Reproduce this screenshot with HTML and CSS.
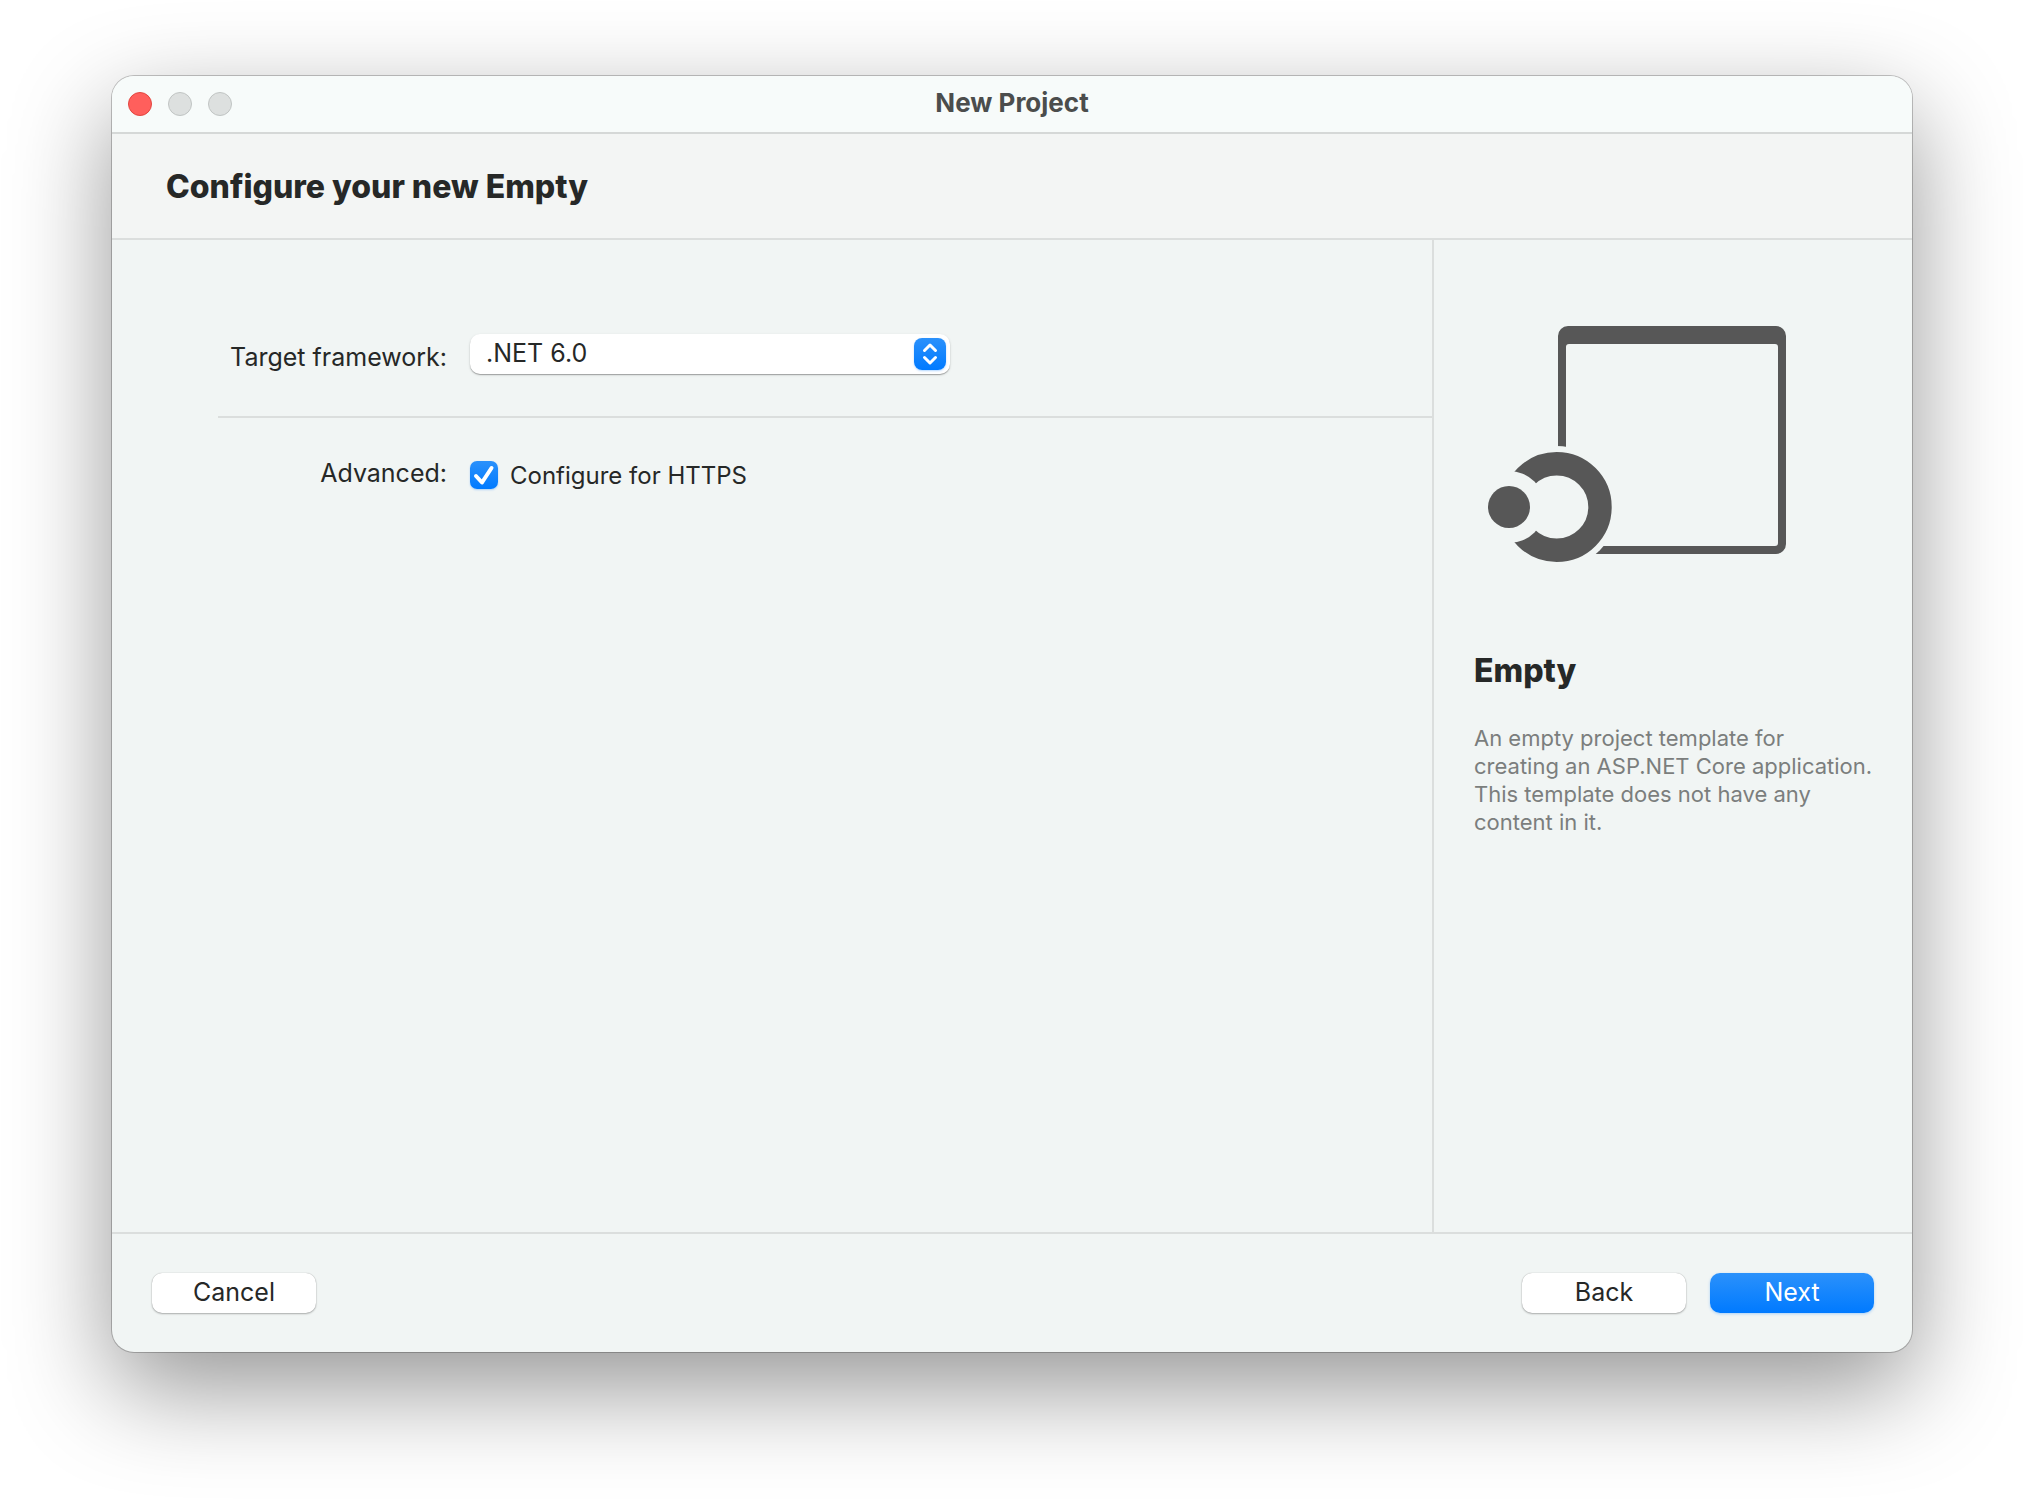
FILE: index.html
```html
<!DOCTYPE html>
<html lang="en">
<head>
<meta charset="utf-8">
<title>New Project</title>
<link rel="stylesheet" href="styles.css">
</head>
<body>
<main class="window">
  <header class="titlebar">
    <div class="traffic">
      <button class="light light-close" type="button" aria-label="Close"></button>
      <button class="light" type="button" aria-label="Minimize" disabled></button>
      <button class="light" type="button" aria-label="Zoom" disabled></button>
    </div>
    <div class="title">New Project</div>
  </header>
  <div class="banner"><h1 class="heading">Configure your new Empty</h1></div>
  <div class="content">
    <form class="form" id="project-form">
      <div class="row row-framework">
        <label class="label" for="framework">Target framework:</label>
        <div class="popup">
          <select class="select" id="framework"><option>.NET 6.0</option></select>
          <svg class="popup-arrows" viewBox="0 0 32 32" aria-hidden="true">
            <path d="M10.500 12.500 16 7l5.500 5.500M10.500 19.500 16 25l5.500-5.500" fill="none" stroke="#fff" stroke-width="3" stroke-linecap="round" stroke-linejoin="round"/>
          </svg>
        </div>
      </div>
      <div class="row row-advanced">
        <div class="label">Advanced:</div>
        <div class="option">
          <span class="check">
            <input class="checkbox" type="checkbox" id="https" checked>
            <svg class="checkmark" viewBox="0 0 28 28" aria-hidden="true">
              <path d="M6 15l6 6.500L21.500 7" fill="none" stroke="#fff" stroke-width="4" stroke-linecap="round" stroke-linejoin="round"/>
            </svg>
          </span>
          <label class="option-label" for="https">Configure for HTTPS</label>
        </div>
      </div>
    </form>
    <aside class="sidebar">
      <svg class="template-icon" viewBox="0 0 298 236" aria-hidden="true">
        <defs>
          <mask id="frame-cut" maskUnits="userSpaceOnUse" x="0" y="0" width="298" height="236">
            <rect width="298" height="236" fill="#fff"/><circle cx="68.700" cy="181" r="61" fill="#000"/>
          </mask>
          <mask id="ring-cut" maskUnits="userSpaceOnUse" x="0" y="0" width="298" height="237">
            <rect width="298" height="237" fill="#fff"/><circle cx="21" cy="181" r="36" fill="#000"/>
          </mask>
        </defs>
        <path mask="url(#frame-cut)" fill="#575757" fill-rule="evenodd" d="M80 0H288a10 10 0 0 1 10 10V218a10 10 0 0 1-10 10H70V10A10 10 0 0 1 80 0ZM81 18a3 3 0 0 0-3 3V220H287a3 3 0 0 0 3-3V21a3 3 0 0 0-3-3Z"/>
        <circle mask="url(#ring-cut)" cx="68.700" cy="181" r="43.300" fill="none" stroke="#575757" stroke-width="23.400"/>
        <circle cx="21" cy="181" r="21" fill="#575757"/>
      </svg>
      <h2 class="heading">Empty</h2>
      <p class="description">An empty project template for<br>creating an ASP.NET Core application. This template does not have any content in it.</p>
    </aside>
  </div>
  <footer class="footer">
    <button class="button" type="button">Cancel</button>
    <div class="actions">
      <button class="button" type="button">Back</button>
      <button class="button button-primary" type="submit" form="project-form">Next</button>
    </div>
  </footer>
</main>
</body>
</html>
```
FILE: styles.css
```css
* { box-sizing: border-box; }

body {
  display: flex;
  min-height: 100vh;
  margin: 0;
  padding: 76px 112px 148px;
  background: #fff;
  color: #262827;
  font-family: Inter, "Liberation Sans", sans-serif;
  font-size: 25px;
  line-height: 32px;
}

h1, h2, p { margin: 0; }
button, select { font: inherit; color: inherit; }

.window {
  display: flex;
  flex: 1;
  flex-direction: column;
  border-radius: 22px;
  background: #f1f5f4;
  overflow: hidden;
  box-shadow: 0 0 0 1px rgba(0, 0, 0, .22), 0 36px 100px rgba(0, 0, 0, .42);
}

.titlebar {
  display: grid;
  grid-template-columns: 1fr auto 1fr;
  align-items: center;
  height: 58px;
  padding: 0 16px;
  background: #f7fbfa;
  border-bottom: 2px solid #d5d8d7;
}

.traffic { display: flex; gap: 16px; }

.light {
  width: 24px;
  height: 24px;
  padding: 0;
  border: 1px solid #c0c4c3;
  border-radius: 50%;
  background: #dde0df;
}

.light-close { border-color: #e2463f; background: #ff5f5c; }

.title {
  padding-bottom: 2px;
  color: #4b4d4c;
  font-size: 26px;
  font-weight: 700;
}

.banner {
  display: flex;
  align-items: center;
  height: 106px;
  padding: 2px 54px 0;
  background: #f3f5f4;
  border-bottom: 2px solid #dbdedd;
}

.heading { font-size: 32px; line-height: 40px; font-weight: 800; }

.content {
  display: grid;
  grid-template-columns: 1fr 480px;
  flex: 1;
}

.form { padding-left: 106px; }

.row {
  display: grid;
  grid-template-columns: 229px 1fr;
  column-gap: 23px;
}

.row-framework {
  padding: 94px 0 42px;
  border-bottom: 2px solid #dbdedd;
}

.row-advanced { padding-top: 39px; }

.label { text-align: right; }
.row-framework .label { padding-top: 7px; }

.popup { position: relative; width: 480px; }

.select {
  display: block;
  appearance: none;
  width: 100%;
  height: 40px;
  padding: 0 48px 2px 16px;
  border: 0;
  border-radius: 10px;
  background: #fff;
  box-shadow: 0 1px 1px rgba(0, 0, 0, .28), 0 1px 3px rgba(0, 0, 0, .12);
}

.popup-arrows {
  position: absolute;
  top: 4px;
  right: 4px;
  width: 32px;
  height: 32px;
  border-radius: 8px;
  background: linear-gradient(#2b91fb, #007aff);
  box-shadow: 0 1px 2px rgba(0, 122, 255, .3);
  pointer-events: none;
}

.option {
  display: flex;
  align-items: center;
  gap: 12px;
  height: 36px;
  font-size: 24px;
}

.option-label { padding-top: 2px; }

.check { position: relative; width: 28px; height: 28px; }

.checkbox {
  display: block;
  appearance: none;
  width: 28px;
  height: 28px;
  margin: 0;
  border-radius: 7px;
  background: #fff;
  box-shadow: 0 1px 2px rgba(0, 122, 255, .3);
}

.checkbox:checked { background: linear-gradient(#2b91fb, #007aff); }

.checkmark {
  position: absolute;
  inset: 0;
  display: none;
  pointer-events: none;
}

.checkbox:checked + .checkmark { display: block; }

.sidebar {
  padding: 86px 32px 40px 40px;
  border-left: 2px solid #dbdedd;
}

.template-icon {
  display: block;
  width: 298px;
  height: 236px;
  margin: 0 0 89px 14px;
}

.description {
  margin-top: 33px;
  color: #7b7e7d;
  font-size: 22px;
  line-height: 28px;
}

.footer {
  display: flex;
  justify-content: space-between;
  align-items: center;
  height: 120px;
  padding: 0 38px 0 40px;
  border-top: 2px solid #dbdedd;
}

.actions { display: flex; gap: 24px; }

.button {
  width: 164px;
  height: 40px;
  padding: 0 0 2px;
  border: 0;
  border-radius: 10px;
  background: #fff;
  box-shadow: 0 0 1px rgba(0, 0, 0, .3), 0 1px 2px rgba(0, 0, 0, .28);
}

.button-primary {
  background: linear-gradient(#2b91fb, #007aff);
  color: #fff;
  box-shadow: 0 1px 3px rgba(0, 122, 255, .3);
}
```
